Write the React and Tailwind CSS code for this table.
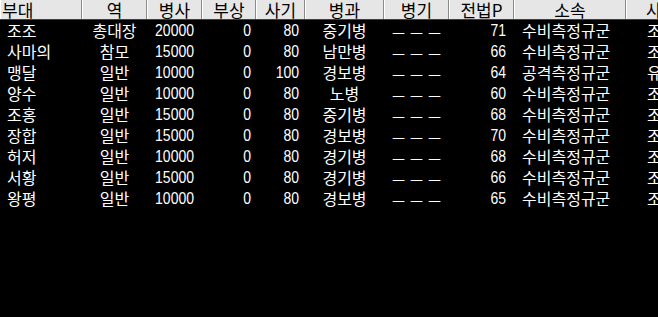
import React from "react";

const cols = [
  { key: "unit", label: "부대", w: "w-[82px]", head: "justify-start pl-[1px]", cell: "justify-start pl-[7px]" },
  { key: "role", label: "역", w: "w-[65px]", head: "justify-center", cell: "justify-center" },
  { key: "troops", label: "병사", w: "w-[55px]", head: "justify-center", cell: "justify-end pr-[8px]", num: true },
  { key: "hurt", label: "부상", w: "w-[54px]", head: "justify-center", cell: "justify-end pr-[5px]", num: true },
  { key: "morale", label: "사기", w: "w-[49px]", head: "justify-center", cell: "justify-end pr-[6px]", num: true },
  { key: "arm", label: "병과", w: "w-[79px]", head: "justify-center", cell: "justify-center" },
  { key: "weapon", label: "병기", w: "w-[65px]", head: "justify-center", cell: "justify-center" },
  { key: "tactic", label: "전법P", w: "w-[65px]", head: "justify-center", cell: "justify-end pr-[8px]", num: true },
  { key: "corps", label: "소속", w: "w-[112px]", head: "justify-center", cell: "justify-start pl-[8px]" },
  { key: "city", label: "사", w: "w-[100px]", head: "justify-start pl-[19px]", cell: "justify-start pl-[21px]" },
];

const rows = [
  ["조조", "총대장", "20000", "0", "80", "중기병", "71", "수비측정규군", "조"],
  ["사마의", "참모", "15000", "0", "80", "남만병", "66", "수비측정규군", "조"],
  ["맹달", "일반", "10000", "0", "100", "경보병", "64", "공격측정규군", "유"],
  ["양수", "일반", "10000", "0", "80", "노병", "60", "수비측정규군", "조"],
  ["조홍", "일반", "15000", "0", "80", "중기병", "68", "수비측정규군", "조"],
  ["장합", "일반", "15000", "0", "80", "경보병", "70", "수비측정규군", "조"],
  ["허저", "일반", "10000", "0", "80", "경기병", "68", "수비측정규군", "조"],
  ["서황", "일반", "15000", "0", "80", "경기병", "66", "수비측정규군", "조"],
  ["왕평", "일반", "10000", "0", "80", "경보병", "65", "수비측정규군", "조"],
];

function cellValue(r, i) {
  if (i < 6) return r[i];
  if (i === 6) return "－－－";
  return r[i - 1];
}

export default function App() {
  return (
    <div
      className="w-[658px] h-[317px] bg-black overflow-hidden"
      style={{ fontFamily: '"Noto Sans CJK KR", sans-serif' }}
    >
      {/* header */}
      <div className="flex h-[20px] bg-[#e6e6e6] border-b border-[#404040] w-[726px]">
        {cols.map((c) => (
          <div
            key={c.key}
            className={`${c.w} ${c.head} shrink-0 flex items-center h-full border-l border-l-white border-r border-r-[#8a8a8a] text-[17px] leading-[19px] text-black`}
          >
            {c.label}
          </div>
        ))}
      </div>

      {/* rows */}
      {rows.map((r) => (
        <div key={r[0]} className="flex h-[21px] text-white w-[726px]">
          {cols.map((c, i) => (
            <div
              key={c.key}
              className={`${c.w} ${c.cell} shrink-0 flex items-center h-full text-[16px] leading-[21px]`}
            >
              {c.num ? (
                <span className="inline-block font-['Liberation_Sans',sans-serif] text-[14px] scale-y-[1.18]">
                  {cellValue(r, i)}
                </span>
              ) : i === 6 ? (
                <span className="tracking-[2px] pl-[2px] translate-y-[2px] inline-block">
                  {cellValue(r, i)}
                </span>
              ) : (
                cellValue(r, i)
              )}
            </div>
          ))}
        </div>
      ))}
    </div>
  );
}
